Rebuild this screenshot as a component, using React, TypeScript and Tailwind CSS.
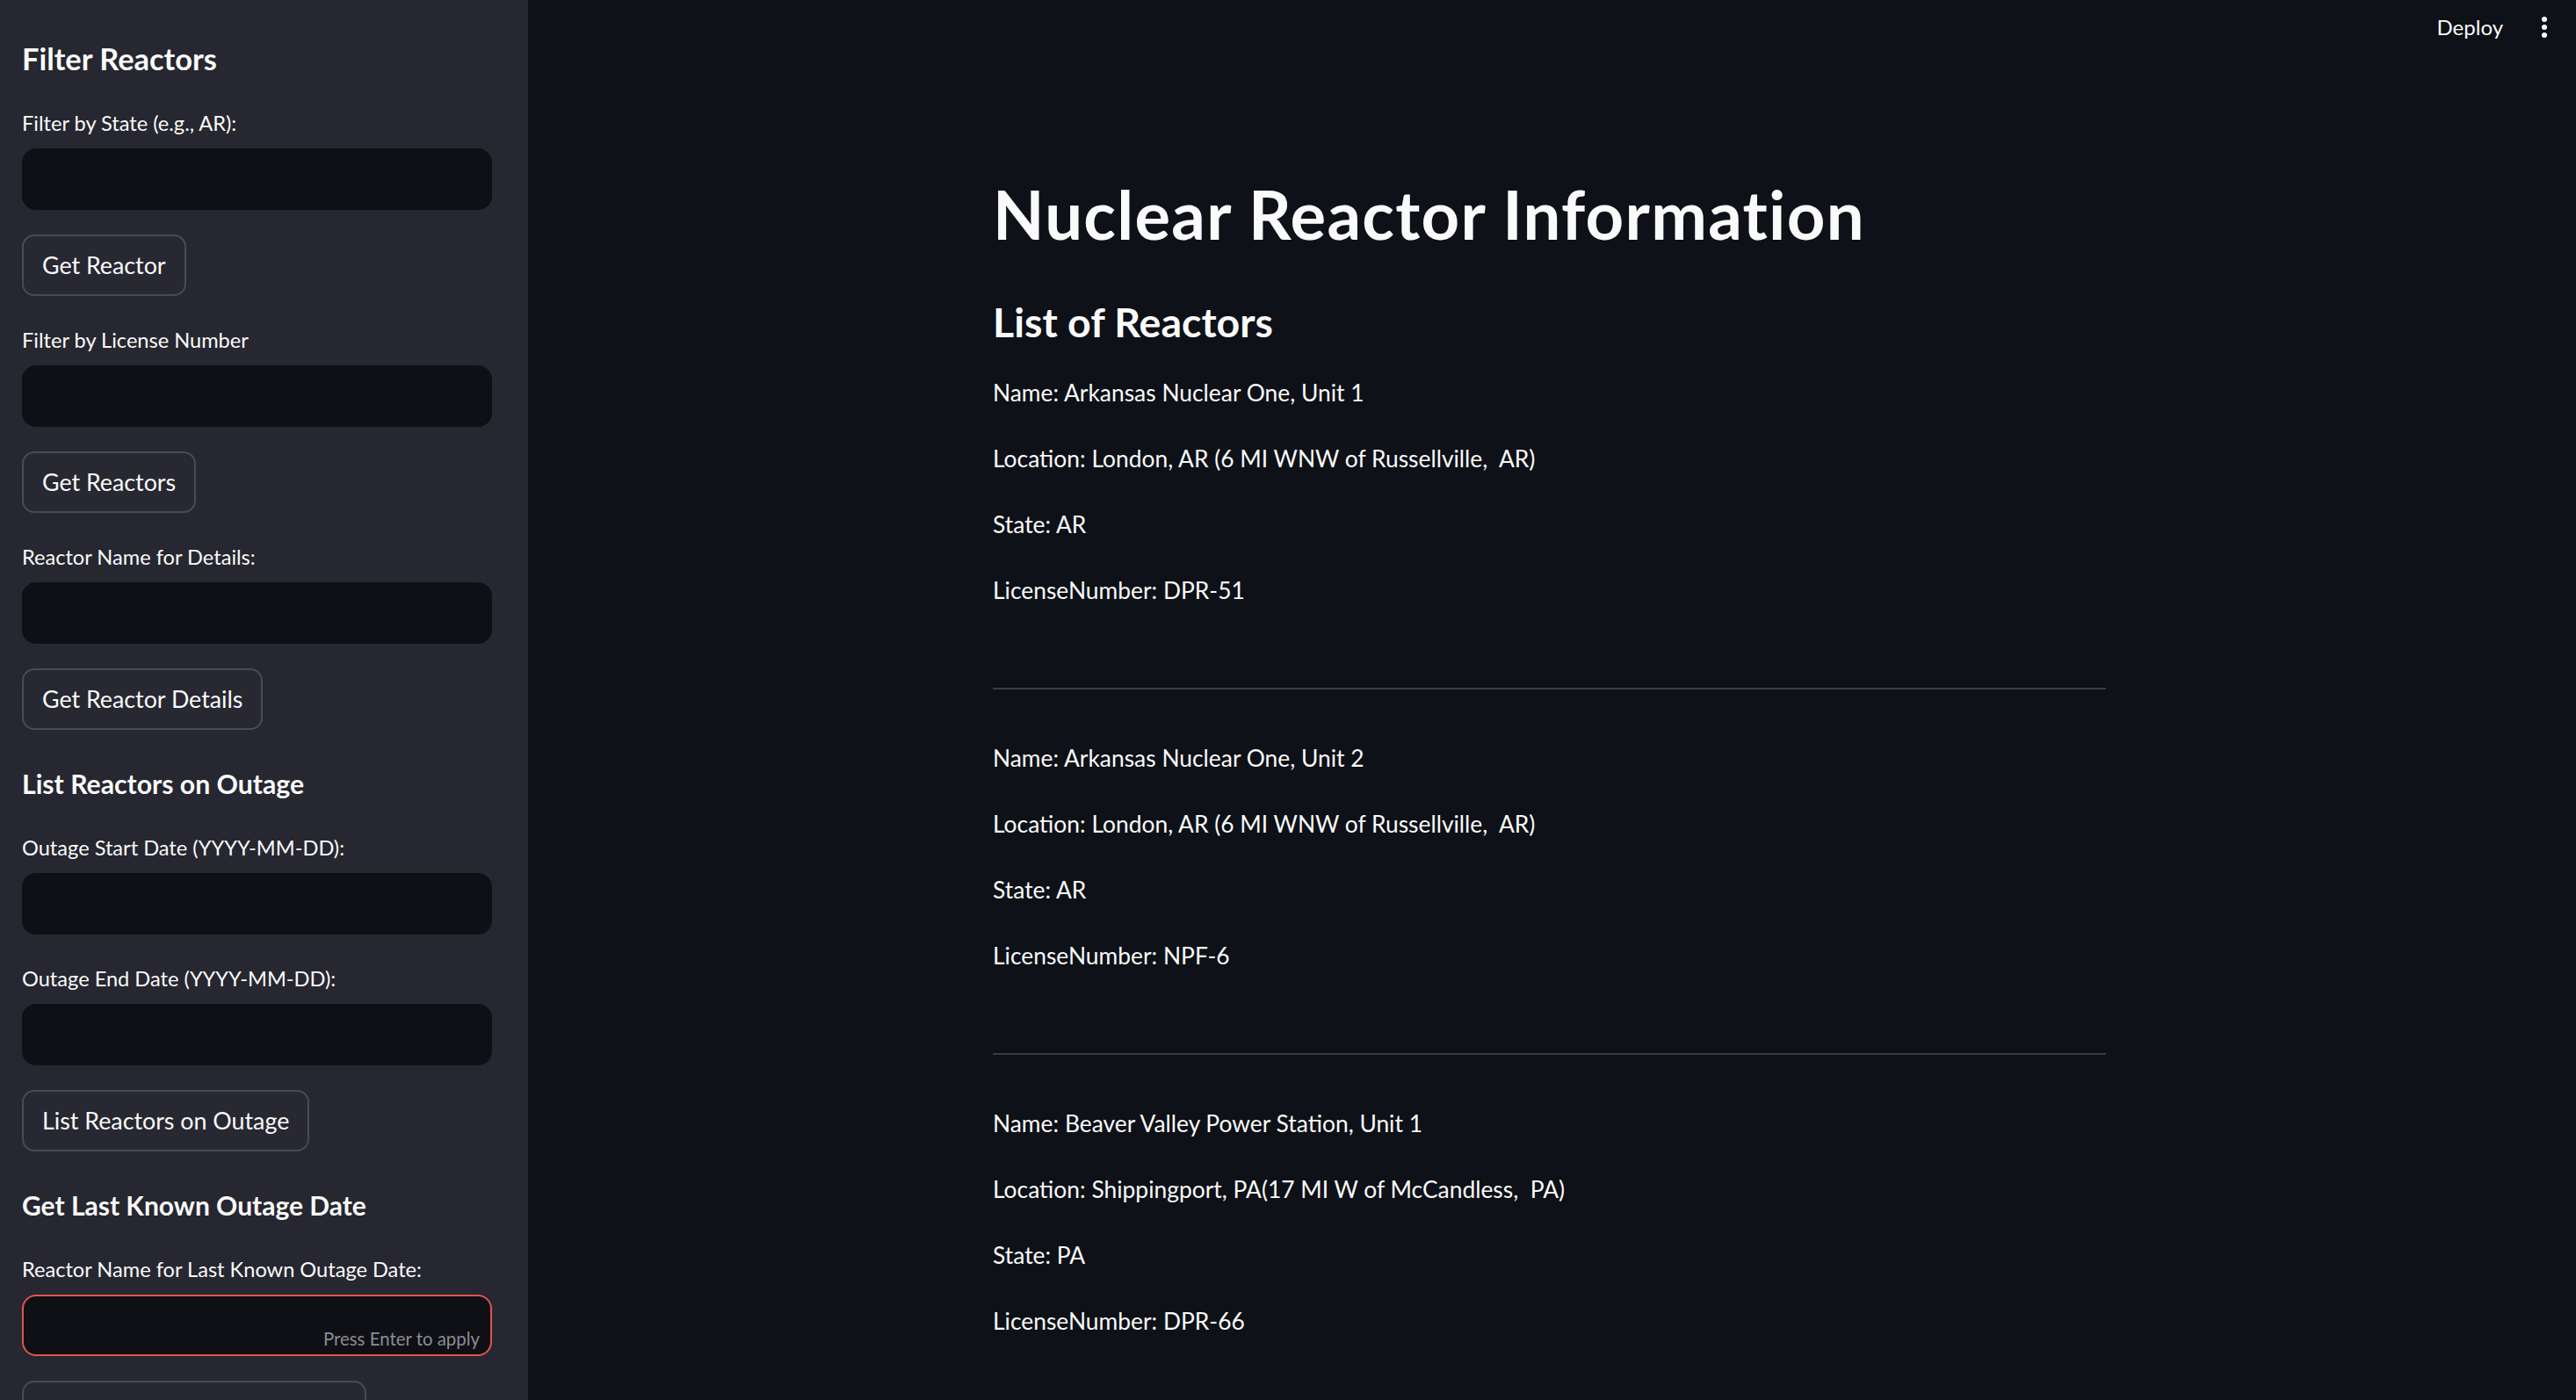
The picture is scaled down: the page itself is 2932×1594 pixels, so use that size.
import React from "react";

const font = { fontFamily: "Lato, 'Noto Sans', sans-serif" };

function Field({ label, active }: { label: string; active?: boolean }) {
  return (
    <div className="flex flex-col">
      <div className="h-[40px] pt-[4px] text-[23.6px] leading-[36px] text-[#fafafa]">{label}</div>
      <div
        className={
          active
            ? "relative mt-[11px] h-[70px] w-full rounded-[16px] border-2 border-[#e0544f] bg-[#0f1015]"
            : "mt-[11px] h-[70px] w-full rounded-[16px] bg-[#0f1015]"
        }
      >
        {active && (
          <span className="absolute bottom-[6px] right-[12px] text-[20.4px] leading-[24px] text-[#8b8c92]">
            Press Enter to apply
          </span>
        )}
      </div>
    </div>
  );
}

function Btn({ children }: { children?: React.ReactNode }) {
  return (
    <div className="flex">
      <div className="flex h-[70px] items-center rounded-[14px] border-2 border-[#494a54] bg-[#272831] px-[21px] text-[26.8px] text-[#fafafa]">
        {children}
      </div>
    </div>
  );
}

function Reactor({ name, loc, state, lic }: { name: string; loc: string; state: string; lic: string }) {
  const cls = "h-[45px] text-[26.4px] leading-[45px] text-[#fafafa] whitespace-pre";
  return (
    <div className="flex flex-col gap-[30px]">
      <p className={cls}>Name: {name}</p>
      <p className={cls}>Location: {loc}</p>
      <p className={cls}>State: {state}</p>
      <p className={cls}>LicenseNumber: {lic}</p>
    </div>
  );
}

export default function App() {
  return (
    <div style={font} className="flex h-[1594px] w-[2932px] overflow-hidden bg-[#0e1117]">
      <aside className="flex h-full w-[601px] shrink-0 flex-col gap-[28px] bg-[#262730] pl-[25px] pr-[41px] pt-[44px]">
        <h2 className="h-[46px] text-[34.4px] font-bold leading-[46px] text-[#fafafa]">Filter Reactors</h2>
        <Field label="Filter by State (e.g., AR):" />
        <Btn>Get Reactor</Btn>
        <Field label="Filter by License Number" />
        <Btn>Get Reactors</Btn>
        <Field label="Reactor Name for Details:" />
        <Btn>Get Reactor Details</Btn>
        <h3 className="mt-[10px] h-[46px] text-[30.2px] font-bold leading-[46px] text-[#fafafa]">List Reactors on Outage</h3>
        <Field label="Outage Start Date (YYYY-MM-DD):" />
        <Field label="Outage End Date (YYYY-MM-DD):" />
        <Btn>List Reactors on Outage</Btn>
        <h3 className="mt-[10px] h-[46px] text-[30px] font-bold leading-[46px] text-[#fafafa]">Get Last Known Outage Date</h3>
        <Field label="Reactor Name for Last Known Outage Date:" active />
        <Btn>Get Last Known Outage Date</Btn>
      </aside>
      <main className="flex min-w-0 flex-1 flex-col">
        <header className="flex h-[62px] items-center justify-end gap-[44px] pr-[33px]">
          <span className="text-[24px] text-[#fafafa]">Deploy</span>
          <div className="flex flex-col gap-[3px]">
            <span className="h-[6px] w-[6px] rounded-full bg-[#fafafa]" />
            <span className="h-[6px] w-[6px] rounded-full bg-[#fafafa]" />
            <span className="h-[6px] w-[6px] rounded-full bg-[#fafafa]" />
          </div>
        </header>
        <div className="ml-[529px] flex w-[1267px] flex-col pt-[139px]">
          <h1 className="h-[85px] text-[76px] font-bold leading-[85px] tracking-[1.3px] text-[#fafafa]">Nuclear Reactor Information</h1>
          <h3 className="mt-[57px] h-[47px] text-[46.5px] font-bold leading-[47px] text-[#fafafa]">List of Reactors</h3>
          <div className="mt-[35px]">
            <Reactor
              name="Arkansas Nuclear One, Unit 1"
              loc="London, AR (6 MI WNW of Russellville,  AR)"
              state="AR"
              lic="DPR-51"
            />
          </div>
          <hr className="mt-[88px] mb-[56px] border-t-2 border-[#3a3b41]" />
          <Reactor
            name="Arkansas Nuclear One, Unit 2"
            loc="London, AR (6 MI WNW of Russellville,  AR)"
            state="AR"
            lic="NPF-6"
          />
          <hr className="mt-[88px] mb-[56px] border-t-2 border-[#3a3b41]" />
          <Reactor
            name="Beaver Valley Power Station, Unit 1"
            loc="Shippingport, PA(17 MI W of McCandless,  PA)"
            state="PA"
            lic="DPR-66"
          />
        </div>
      </main>
    </div>
  );
}
